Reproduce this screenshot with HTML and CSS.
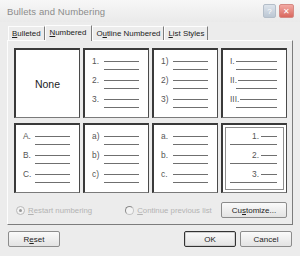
FILE: index.html
```html
<!DOCTYPE html>
<html lang="en">
<head>
  <meta charset="UTF-8" />
  <title>Bullets and Numbering</title>
  <link rel="stylesheet" href="styles.css">
</head>
<body>
  <div class="window">
    <div class="titlebar">
      <span class="title">Bullets and Numbering</span>
      <span class="tb-btn help">?</span>
      <span class="tb-btn close">✕</span>
    </div>

    <div class="tabs">
      <span class="tab"><u>B</u>ulleted</span>
      <span class="tab active"><u>N</u>umbered</span>
      <span class="tab">O<u>u</u>tline Numbered</span>
      <span class="tab"><u>L</u>ist Styles</span>
    </div>

    <div class="panel">
      <div class="grid">
        <div class="cell none">None</div>

        <div class="cell">
          <div class="item"><div class="row"><span class="lbl">1.</span><i class="ln"></i></div><i class="ln sub"></i></div>
          <div class="item"><div class="row"><span class="lbl">2.</span><i class="ln"></i></div><i class="ln sub"></i></div>
          <div class="item"><div class="row"><span class="lbl">3.</span><i class="ln"></i></div><i class="ln sub"></i></div>
        </div>

        <div class="cell">
          <div class="item"><div class="row"><span class="lbl">1)</span><i class="ln"></i></div><i class="ln sub"></i></div>
          <div class="item"><div class="row"><span class="lbl">2)</span><i class="ln"></i></div><i class="ln sub"></i></div>
          <div class="item"><div class="row"><span class="lbl">3)</span><i class="ln"></i></div><i class="ln sub"></i></div>
        </div>

        <div class="cell roman">
          <div class="item"><div class="row"><span class="lbl">I.</span><i class="ln"></i></div><i class="ln sub"></i></div>
          <div class="item"><div class="row"><span class="lbl">II.</span><i class="ln"></i></div><i class="ln sub"></i></div>
          <div class="item"><div class="row"><span class="lbl">III.</span><i class="ln"></i></div><i class="ln sub"></i></div>
        </div>

        <div class="cell">
          <div class="item"><div class="row"><span class="lbl">A.</span><i class="ln"></i></div><i class="ln sub"></i></div>
          <div class="item"><div class="row"><span class="lbl">B.</span><i class="ln"></i></div><i class="ln sub"></i></div>
          <div class="item"><div class="row"><span class="lbl">C.</span><i class="ln"></i></div><i class="ln sub"></i></div>
        </div>

        <div class="cell">
          <div class="item"><div class="row"><span class="lbl">a)</span><i class="ln"></i></div><i class="ln sub"></i></div>
          <div class="item"><div class="row"><span class="lbl">b)</span><i class="ln"></i></div><i class="ln sub"></i></div>
          <div class="item"><div class="row"><span class="lbl">c)</span><i class="ln"></i></div><i class="ln sub"></i></div>
        </div>

        <div class="cell">
          <div class="item"><div class="row"><span class="lbl">a.</span><i class="ln"></i></div><i class="ln sub"></i></div>
          <div class="item"><div class="row"><span class="lbl">b.</span><i class="ln"></i></div><i class="ln sub"></i></div>
          <div class="item"><div class="row"><span class="lbl">c.</span><i class="ln"></i></div><i class="ln sub"></i></div>
        </div>

        <div class="cell right selected">
          <div class="item"><div class="row"><span class="lbl">1.</span><i class="ln"></i></div><i class="ln sub"></i></div>
          <div class="item"><div class="row"><span class="lbl">2.</span><i class="ln"></i></div><i class="ln sub"></i></div>
          <div class="item"><div class="row"><span class="lbl">3.</span><i class="ln"></i></div><i class="ln sub"></i></div>
        </div>
      </div>

      <div class="options">
        <span class="radio checked"></span>
        <span class="opt-text"><u>R</u>estart numbering</span>
        <span class="radio second"></span>
        <span class="opt-text"><u>C</u>ontinue previous list</span>
        <button class="btn customize">Cu<u>s</u>tomize...</button>
      </div>
    </div>

    <div class="footer">
      <button class="btn">R<u>e</u>set</button>
      <span class="spacer"></span>
      <button class="btn default">OK</button>
      <button class="btn">Cancel</button>
    </div>
  </div>
</body>
</html>
```

FILE: styles.css
```css
body {
  margin: 0;
  font-family: "Liberation Sans", Arial, sans-serif;
  background: #ececec;
  color: #222;
}

.window {
  width: 300px;
  height: 256px;
  overflow: hidden;
  display: flex;
  flex-direction: column;
  background: #ececec;
}

u {
  text-decoration: underline;
  text-underline-offset: 1px;
}

/* title bar */
.titlebar {
  height: 22px;
  display: flex;
  align-items: center;
  padding: 0 6px 0 7px;
  background: linear-gradient(#f7f7f7, #eaeaea);
}

.title {
  flex: 1;
  font-size: 9.5px;
  color: #8c8c8c;
  letter-spacing: 0.1px;
}

.tb-btn {
  display: flex;
  align-items: center;
  justify-content: center;
  height: 12px;
  font-size: 8px;
  color: #fff;
  border-radius: 2px;
}

.help {
  width: 11px;
  margin-right: 3px;
  background: linear-gradient(#dde4ec, #bcc7d3);
  border: 1px solid #b4bec9;
}

.close {
  width: 13px;
  background: linear-gradient(#f3a9a3, #d9685e);
  border: 1px solid #d58a84;
}

/* tabs */
.tabs {
  height: 18px;
  display: flex;
  align-items: flex-end;
  padding-left: 8px;
  font-size: 7.9px;
}

.tab {
  height: 13px;
  line-height: 13px;
  padding: 0 3px 0 3px;
  border-top: 1px solid #fdfdfd;
  border-left: 1px solid #fdfdfd;
  border-right: 1px solid #7c7c7c;
  color: #222;
}

.tab.active {
  height: 15px;
  line-height: 14px;
  padding: 0 5px 0 4px;
  margin-bottom: -1px;
  background: #ececec;
  position: relative;
  z-index: 1;
}

/* panel */
.panel {
  margin: 0 7px;
  border: 1px solid;
  border-color: #fdfdfd #7c7c7c #7c7c7c #fdfdfd;
  padding: 7px 5px 6px 6px;
}

.grid {
  display: grid;
  grid-template-columns: repeat(4, 66px);
  grid-template-rows: 70px 70px;
  column-gap: 3px;
  row-gap: 5px;
}

.cell {
  background: #fff;
  border-style: solid;
  border-width: 2px 1px 1px 2px;
  border-color: #3a3a3a #4a4a4a #7a7a7a #3a3a3a;
  padding: 6px 9px 0 7px;
  font-size: 8.4px;
  color: #555;
}

.cell.none {
  display: flex;
  align-items: center;
  justify-content: center;
  padding: 0;
  font-size: 10.5px;
  color: #222;
}

.item {
  height: 19px;
}

.row {
  display: flex;
  align-items: center;
  height: 10px;
}

.lbl {
  width: 12px;
  flex: none;
}

.ln {
  display: block;
  flex: 1;
  height: 1px;
  background: #6f6f6f;
}

.ln.sub {
  margin: 3px 0 0 12px;
}

.roman .lbl {
  width: auto;
  margin-right: 1px;
}

.roman .ln.sub {
  margin-left: 6px;
}

.right .row {
  justify-content: flex-end;
}

.right .lbl {
  width: auto;
  margin-right: 2px;
}

.right .row .ln {
  flex: 0 0 16px;
}

.right .ln.sub {
  margin-left: 0;
}

.selected {
  box-shadow: inset 0 0 0 2px #fff, inset 0 0 0 3px #8e8e8e;
}

/* options row */
.options {
  display: flex;
  align-items: center;
  height: 16px;
  margin-top: 9px;
  font-size: 7.8px;
}

.radio {
  width: 7px;
  height: 7px;
  border-radius: 50%;
  border: 1px solid #b9b9b9;
  background: #f3f3f3;
  margin: 0 3px 0 2px;
  display: flex;
  align-items: center;
  justify-content: center;
}

.radio.checked::after {
  content: "";
  width: 3px;
  height: 3px;
  border-radius: 50%;
  background: #9a9a9a;
}

.radio.second {
  margin-left: 33px;
  border-color: #8a8a8a #c4c4c4 #c4c4c4 #8a8a8a;
}

.opt-text {
  color: #b3b3b3;
}

.btn {
  height: 16px;
  padding: 0;
  font-family: inherit;
  font-size: 8px;
  color: #222;
  border: 1px solid #8c8c8c;
  border-radius: 2px;
  background: linear-gradient(#fafafa, #e3e3e3);
}

.customize {
  width: 66px;
  margin-left: auto;
}

/* footer */
.footer {
  display: flex;
  gap: 4px;
  padding: 6px 8px 0 8px;
}

.footer .btn {
  width: 52px;
}

.spacer {
  flex: 1;
}

.btn.default {
  border-color: #333;
  box-shadow: inset 0 0 0 1px #cfcfcf;
}
```
